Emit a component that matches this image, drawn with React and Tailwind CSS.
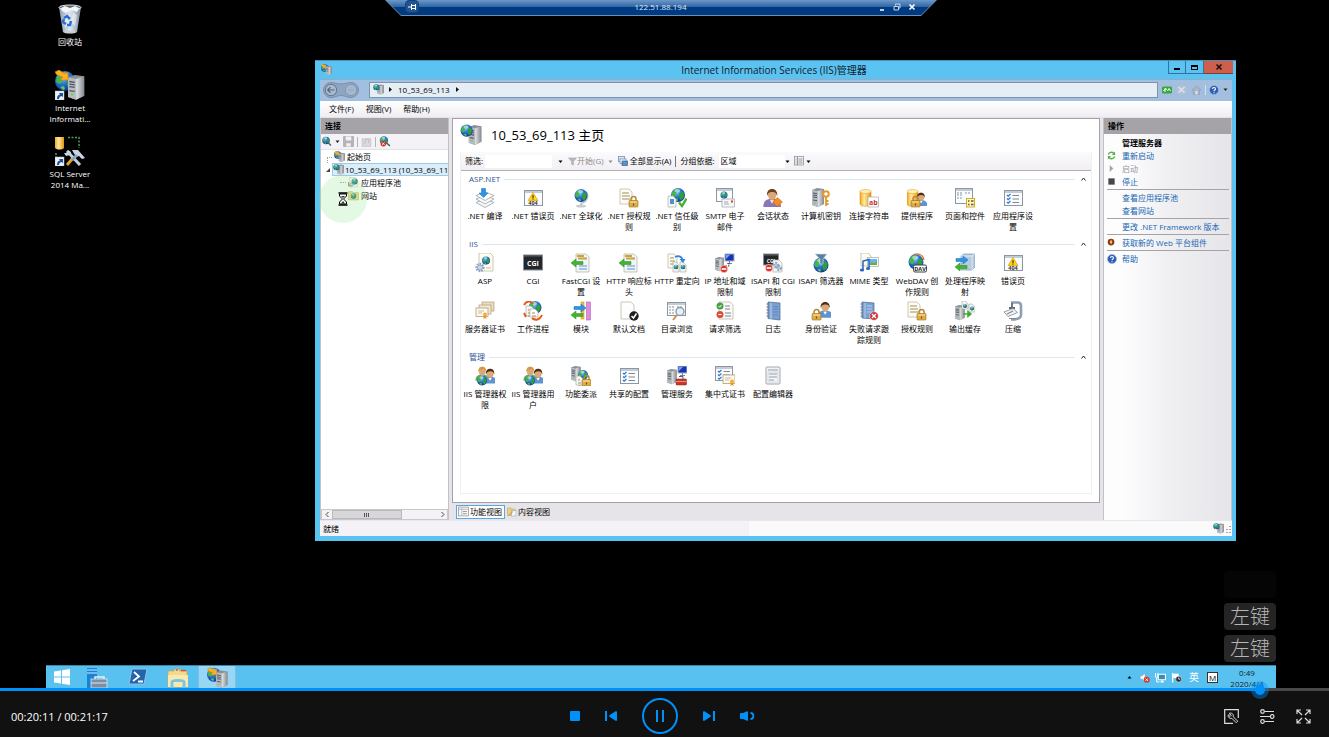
import React, { useState } from "react";

/* ---------- icon parts, all drawn on a 20x20 grid ---------- */

const Svg = ({ size = "w-5 h-5", box = "0 0 20 20", children }) => (
  <svg className={`${size} block shrink-0`} viewBox={box} fill="none" aria-hidden="true">
    {children}
  </svg>
);

const Defs = () => (
  <svg className="absolute w-0 h-0" aria-hidden="true">
    <defs>
      <radialGradient id="sea" cx="0.4" cy="0.3" r="0.75">
        <stop offset="0" stopColor="#8fd0ff" />
        <stop offset="0.45" stopColor="#2b74d8" />
        <stop offset="1" stopColor="#0c2f8c" />
      </radialGradient>
      <linearGradient id="gold" x1="0" y1="0" x2="1" y2="0">
        <stop offset="0" stopColor="#f5a81c" />
        <stop offset="0.4" stopColor="#ffe9a0" />
        <stop offset="1" stopColor="#e8920c" />
      </linearGradient>
      <linearGradient id="steel" x1="0" y1="0" x2="1" y2="0">
        <stop offset="0" stopColor="#e3e5e8" />
        <stop offset="1" stopColor="#85898f" />
      </linearGradient>
      <linearGradient id="bin" x1="0" y1="0" x2="1" y2="0">
        <stop offset="0" stopColor="#8f9dae" />
        <stop offset="0.5" stopColor="#dfe8f1" />
        <stop offset="1" stopColor="#7d8b9b" />
      </linearGradient>
    </defs>
  </svg>
);

const Globe = ({ x = 10, y = 10, r = 7 }) => (
  <g transform={`translate(${x} ${y}) scale(${r / 10})`}>
    <circle r="10" fill="url(#sea)" />
    <path d="M-8-4C-6-8-2-9 1-9L0-5-3-3-2 0-5 3-9 1Z" fill="#43b649" />
    <path d="M2-2 6-5 9-2 8 4 4 8 2 4Z" fill="#2f9f3d" />
    <path d="M-5 6-1 5 0 8-2 9Z" fill="#5cc85a" />
    <ellipse cx="-1" cy="-6" rx="4" ry="2.5" fill="#fff" opacity="0.5" />
  </g>
);

const Server = ({ x = 0, y = 0, s = 1 }) => (
  <g transform={`translate(${x} ${y}) scale(${s})`}>
    <path d="M0 2 5 0 12 1 12 16 6 19 0 17Z" fill="#8b9097" />
    <path d="M0 2 6 3V19L0 17Z" fill="#b7bcc3" />
    <path d="M6 3 12 1V16L6 19Z" fill="url(#steel)" />
    <path d="M1 5 5 5.6M1 7 5 7.6M1 9 5 9.6M1 12 5 12.6" stroke="#51565e" />
    <circle cx="3" cy="15" r="0.8" fill="#58d048" />
  </g>
);

const Doc = ({ x = 0, y = 0, w = 11, h = 14, tint = "#fffdf2", lines = true }) => (
  <g transform={`translate(${x} ${y})`}>
    <path d={`M0 0H${w - 3}L${w} 3V${h}H0Z`} fill={tint} stroke="#b5b09a" strokeWidth="0.7" />
    {lines && <path d={`M2 4H${w - 3}M2 7H${w - 2}M2 10H${w - 2}`} stroke="#9c8f63" />}
  </g>
);

const Win = ({ x = 1, y = 2, w = 18, h = 15, children }) => (
  <g transform={`translate(${x} ${y})`}>
    <rect x="0.5" y="0.5" width={w} height={h} fill="#fbfcfd" stroke="#8e979f" />
    <path d={`M1 2H${w}`} stroke="#c3ccd6" strokeWidth="2" />
    {children}
  </g>
);

const Lock = ({ x = 0, y = 0 }) => (
  <g transform={`translate(${x} ${y})`}>
    <path d="M2 5V3a2.5 2.5 0 0 1 5 0V5" stroke="#b3883a" strokeWidth="1.5" />
    <rect y="4.5" width="9" height="6.5" rx="0.8" fill="#e0ac45" stroke="#9a7020" strokeWidth="0.6" />
    <path d="M1 6H8" stroke="#ffe29a" />
    <path d="M4.5 7.5V9.5" stroke="#6e4b10" strokeWidth="1.2" />
  </g>
);

const Person = ({ x = 0, y = 0, body = "#5d93cf", hair = "#6b4420", s = 1 }) => (
  <g transform={`translate(${x} ${y}) scale(${s})`}>
    <path d="M-0.500 14C-0.500 9.500 2 8 6 8s6.500 1.500 6.500 6Z" fill={body} />
    <path d="M4.500 7H7.500L7 10H5Z" fill="#c78d5e" />
    <ellipse cx="6" cy="4.700" rx="3.300" ry="4" fill="#dba879" />
    <path d="M2.300 6C1 -1 11 -1 9.700 6 9.300 3.500 8 2.800 6 3 4 3.200 3 3.500 2.300 6Z" fill={hair} />
    <path d="M4.500 9 6 11.500 7.500 9Z" fill="#fff" />
  </g>
);

const Db = ({ x = 0, y = 0 }) => (
  <g transform={`translate(${x} ${y})`}>
    <path d="M0 2.500V15C0 18 11 18 11 15V2.500Z" fill="url(#gold)" stroke="#c9860f" strokeWidth="0.5" />
    <ellipse cx="5.500" cy="2.500" rx="5.500" ry="2" fill="#ffeeb5" stroke="#d99a1f" strokeWidth="0.5" />
  </g>
);

const NoEntry = ({ x, y }) => (
  <g transform={`translate(${x} ${y})`}>
    <circle r="3.700" fill="#d6342b" stroke="#fff" strokeWidth="0.5" />
    <path d="M-2.300 0H2.300" stroke="#fff" strokeWidth="1.600" />
  </g>
);

const Checks = ({ x = 0, y = 0 }) => (
  <g transform={`translate(${x} ${y})`}>
    <path d="M0 1 1.200 2.200 3.500 0M0 4.500 1.200 5.700 3.500 3.500M0 8 1.200 9.200 3.500 7" stroke="#2a7bd0" strokeWidth="1.300" />
    <path d="M5.500 1.500H12M5.500 5H12M5.500 8.500H12" stroke="#7d8790" />
  </g>
);

const Cert = ({ x = 0, y = 0 }) => (
  <g transform={`translate(${x} ${y})`}>
    <rect width="12" height="8.500" fill="#fffaf0" stroke="#b39b72" strokeWidth="0.800" />
    <path d="M2 3H8M2 5H6" stroke="#b8aa92" strokeWidth="0.800" />
    <path d="M8 7 7.500 11 9 10 10.500 11 10 7Z" fill="#e88f1c" />
    <circle cx="9" cy="6.500" r="2" fill="#f5ae2d" />
  </g>
);

const Warning = ({ x, y }) => (
  <g transform={`translate(${x} ${y})`}>
    <path d="M5 0 10 8H0Z" fill="#ffd21a" stroke="#d79b08" strokeWidth="0.600" />
    <path d="M5 2.800V5.200M5 6V7" stroke="#2b2412" strokeWidth="1.200" />
  </g>
);

const LeftArrow = ({ x = 0, y = 0, fill = "#41b52f" }) => (
  <path transform={`translate(${x} ${y})`} d="M0 4 5 0V2.500H12V5.500H5V8Z" fill={fill} stroke="#2d8a20" strokeWidth="0.500" />
);

const RightArrow = ({ x = 0, y = 0 }) => (
  <path transform={`translate(${x} ${y})`} d="M12 4 7 0V2.500H0V5.500H7V8Z" fill="#2f93e6" stroke="#1c6cba" strokeWidth="0.500" />
);

const DarkCgi = ({ y = 2, w = 19, h = 15, size = 7 }) => (
  <g>
    <rect x="0.500" y={y} width={w} height={h} fill="#23272b" stroke="#8a9095" />
    <path d={`M1 ${y + 1}H${w}`} stroke="#5a6167" />
    <text x={w / 2 + 0.5} y={y + h / 2 + 3} textAnchor="middle" fontSize={size} fontWeight="700" fill="#fff" fontFamily="Open Sans">CGI</text>
  </g>
);

const Monitor = ({ x = 0, y = 0 }) => (
  <g transform={`translate(${x} ${y})`}>
    <rect width="9" height="7" fill="#1534b8" stroke="#a9b3c2" />
    <path d="M1 1H5L1 5Z" fill="#7f9df0" />
    <path d="M4.500 7V9M2 9.500H7" stroke="#7c8694" />
  </g>
);

const Gear = ({ x, y, r = 3.5 }) => (
  <g transform={`translate(${x} ${y})`}>
    <circle r={r} stroke="#8fa9c4" strokeWidth="2.400" strokeDasharray="1.600 1" />
    <circle r={r - 1} fill="#dce7f2" stroke="#7d9ab8" strokeWidth="0.800" />
    <circle r="1" fill="#fff" stroke="#7d9ab8" strokeWidth="0.500" />
  </g>
);

const icons = {
  compile: (
    <>
      <path d="M1 14.500 10 11 19 14.500 10 19.500Z" fill="#f6f7f8" stroke="#9ba3ab" strokeWidth="0.800" />
      <path d="M1 11 10 7.500 19 11 10 16Z" fill="#fbfbfc" stroke="#9ba3ab" strokeWidth="0.800" />
      <path d="M1 7.500 10 4 19 7.500 10 12.500Z" fill="#fff" stroke="#9ba3ab" strokeWidth="0.800" />
      <path d="M6.500 0.500H10.500V5H13L8.500 9.500 4 5H6.500Z" fill="#2b93e8" stroke="#1a6dbd" strokeWidth="0.500" />
    </>
  ),
  notFound: (
    <>
      <Win />
      <Warning x={5} y={4.5} />
      <text x="10" y="17" textAnchor="middle" fontSize="5.500" fontWeight="700" fill="#333" fontFamily="Open Sans">404</text>
    </>
  ),
  globalize: (
    <>
      <ellipse cx="10" cy="18" rx="5" ry="1.500" fill="#c8ccd1" />
      <path d="M15.500 3.500C18.500 8 16 15 10 15V17.500" stroke="#b2b8bf" strokeWidth="1.200" />
      <Globe x={10} y={7.5} r={6.5} />
    </>
  ),
  authRules: (
    <>
      <Doc x={1} y={1} w={12} h={15} />
      <Lock x={10} y={8} />
    </>
  ),
  trust: (
    <>
      <Globe x={11} y={7} r={7} />
      <Doc x={1} y={8} w={8} h={11} tint="#f2f6fa" lines={false} />
      <rect x="3" y="11" width="4" height="5" fill="#4c90cf" />
      <path d="M12 14.500 15 18 19.500 10.500" stroke="#3fb02f" strokeWidth="2.400" />
    </>
  ),
  smtp: (
    <>
      <Win x={1} y={0} w={16} h={13} />
      <Globe x={9} y={7} r={3.5} />
      <rect x="7" y="11" width="12.500" height="8" fill="#f7f7f8" stroke="#9aa1a9" strokeWidth="0.700" />
      <path d="M9 14H13M9 16H14" stroke="#8f97a0" strokeWidth="0.800" />
      <rect x="16" y="12.500" width="2" height="2" fill="#e0383a" />
    </>
  ),
  session: (
    <>
      <Person x={1} y={0} s={1.35} body="#8a75b8" hair="#6f421d" />
      <path d="M14.500 9.500 19.500 14 14.500 18.500 9.500 14Z" fill="#f28b24" stroke="#c96812" strokeWidth="0.500" />
    </>
  ),
  machineKey: (
    <>
      <Server x={1} y={0} />
      <circle cx="15" cy="6" r="2.800" stroke="#e39a26" strokeWidth="2" />
      <path d="M15 9V18M15 13H17.500M15 16H17.500" stroke="#e39a26" strokeWidth="1.800" />
    </>
  ),
  connStr: (
    <>
      <Db x={1} y={1} />
      <rect x="9" y="9" width="10.500" height="10" fill="#fff" stroke="#a9a9a9" strokeWidth="0.700" />
      <text x="14.300" y="17" textAnchor="middle" fontSize="7" fontWeight="700" fill="#d0302b" fontFamily="Open Sans">ab</text>
    </>
  ),
  providers: (
    <>
      <Db x={0} y={1} />
      <Person x={8} y={4} s={1} hair="#4d3016" />
      <Lock x={4} y={8} />
    </>
  ),
  pages: (
    <>
      <Win x={0} y={0} w={17} h={15}>
        <path d="M2 5H8M2 7H8M10 5H15M2 10H7" stroke="#8095ad" strokeDasharray="2 1" />
      </Win>
      <rect x="11.500" y="10.500" width="8" height="8.500" fill="#fff6bd" stroke="#d1ad2a" />
      <path d="M13 13H14.500M16 13H18.500M13 16.500H14.500M16 16.500H18.500" stroke="#645a2b" strokeWidth="1.400" />
    </>
  ),
  settings: (
    <>
      <Win />
      <Checks x={4} y={6} />
    </>
  ),
  asp: (
    <>
      <Doc x={4} y={0} w={14} h={18} lines={false} />
      <Globe x={11} y={7.5} r={4} />
      <path d="M11 15H16" stroke="#c9bd94" />
      <Gear x={5} y={14.5} />
    </>
  ),
  cgi: <DarkCgi />,
  headers: (
    <>
      <Doc x={5} y={1} w={13} h={18} tint="#eff5fa" lines={false} />
      <path d="M6 3H13M7 5.500H16" stroke="#c4a63a" strokeWidth="1.800" />
      <path d="M8 13H16M8 16H16" stroke="#8fb4d8" strokeWidth="1.500" />
      <LeftArrow x={0} y={6} />
    </>
  ),
  redirect: (
    <>
      <Doc x={1} y={1} w={9} h={14} />
      <Doc x={6} y={9} w={6} h={10} tint="#eef5fb" lines={false} />
      <Doc x={13} y={9} w={6} h={10} tint="#eef5fb" lines={false} />
      <Globe x={9} y={14} r={2.3} />
      <Globe x={16} y={14} r={2.3} />
      <path d="M8 4C12 2 15 4 15.500 7" stroke="#2b86d9" strokeWidth="1.800" />
      <path d="M12.500 6H18.500L16 10Z" fill="#2b86d9" />
    </>
  ),
  ip: (
    <>
      <Server x={0} y={4} s={0.75} />
      <Monitor x={10} y={1} />
      <path d="M14 10V13H9" stroke="#303640" strokeDasharray="1.500 1" />
      <NoEntry x={9} y={16} />
    </>
  ),
  isapiCgi: (
    <>
      <DarkCgi y={1} w={15} h={11} size={5} />
      <Doc x={10} y={7} w={9} h={12} tint="#f5f7fa" lines={false} />
      <Gear x={13} y={12} r={2} />
      <Gear x={16} y={15} r={2} />
      <NoEntry x={6} y={15} />
    </>
  ),
  isapiFilter: (
    <>
      <Globe x={10} y={12} r={7.5} />
      <path d="M4 1H16L12 6V11H9V6Z" fill="#5e7f9c" stroke="#d5e2ec" strokeWidth="0.600" />
    </>
  ),
  mime: (
    <>
      <Doc x={2} y={0} w={10} h={13} lines={false} />
      <rect x="8.500" y="4.500" width="11" height="9" fill="#f8fbff" stroke="#a4acb3" strokeWidth="0.700" />
      <path d="M10 6H18V12H10Z" fill="#6cb3eb" />
      <path d="M10 12 13 9 15 10.500 18 8V12Z" fill="#62b23d" />
      <path d="M4 16V8L10 6.500V15" stroke="#2464bd" strokeWidth="1.500" />
      <ellipse cx="3" cy="17" rx="2.200" ry="1.600" fill="#2464bd" />
      <ellipse cx="9" cy="15.500" rx="2" ry="1.500" fill="#2464bd" />
    </>
  ),
  webdav: (
    <>
      <path d="M3 7C4-1 16-1 17 7" stroke="#e07a34" strokeWidth="1.500" />
      <Globe x={9} y={9} r={7.5} />
      <rect x="6.500" y="12" width="13" height="7" rx="1.500" fill="#fff" stroke="#3b424a" />
      <text x="13" y="17.600" textAnchor="middle" fontSize="5.500" fontWeight="700" fill="#222" fontFamily="Open Sans">DAV</text>
    </>
  ),
  handlers: (
    <>
      <path d="M6 3 9 1H20V14L17 17H6Z" fill="#b4cbe0" stroke="#7f99b3" strokeWidth="0.700" />
      <path d="M6 3H17V17M17 3 20 1" stroke="#e9f2fa" strokeWidth="0.800" />
      <RightArrow x={1} y={3} />
      <LeftArrow x={0} y={10} />
    </>
  ),
  certs: (
    <>
      <rect x="7" y="1" width="12" height="9" fill="#e9dcc4" stroke="#b39b72" strokeWidth="0.700" />
      <rect x="4" y="4" width="12" height="9" fill="#f3e8d4" stroke="#b39b72" strokeWidth="0.700" />
      <Cert x={1} y={7} />
    </>
  ),
  worker: (
    <>
      <Globe x={12} y={6.5} r={6.5} />
      <Doc x={3} y={5} w={8} h={10} tint="#f4f4f4" />
      <Doc x={7} y={8} w={8} h={8} tint="#fff" />
      <path d="M1 4C4-1 8 0 10 3M19 14C17 19 12 20 9 17M3 16 1 12" stroke="#e65a1e" strokeWidth="2" />
    </>
  ),
  modules: (
    <>
      <rect x="10" y="1" width="3" height="17" fill="#f3c33a" stroke="#bd8c12" strokeWidth="0.500" />
      <rect x="15.500" y="1" width="4" height="18" fill="#e08be0" stroke="#a050a5" strokeWidth="0.500" />
      <RightArrow x={3} y={3} />
      <LeftArrow x={0} y={10} />
    </>
  ),
  defaultDoc: (
    <>
      <Doc x={2} y={1} w={13} h={17} tint="#fdfdfd" lines={false} />
      <circle cx="15" cy="15" r="4.700" fill="#1c1e20" />
      <path d="M12.500 15 14.500 17 17.500 12.500" stroke="#fff" strokeWidth="1.500" />
    </>
  ),
  browse: (
    <>
      <Win x={0} y={1} w={18} h={13}>
        <path d="M2 5H8M2 8H7M2 11H8M10 5H16" stroke="#8a9096" strokeDasharray="2 1" />
      </Win>
      <circle cx="13" cy="10.500" r="4" fill="#e3f1fc" stroke="#8c979f" strokeWidth="1.300" />
      <path d="M10 14 6 19" stroke="#c98e4d" strokeWidth="2" />
    </>
  ),
  reqFilter: (
    <>
      <Doc x={4} y={1} w={14} h={17} tint="#fbfbfb" lines={false} />
      <path d="M10 5H15M10 8H15M10 12H16M10 15H16" stroke="#7b858e" />
      <circle cx="5" cy="5" r="3.500" fill="#42a447" />
      <circle cx="5" cy="13.500" r="3.500" fill="#e04a35" />
      <path d="M3.500 5 4.700 6.200 6.500 4M3.300 13.500H6.700" stroke="#fff" />
    </>
  ),
  log: (
    <>
      <path d="M5 1 17 2V19L5 17.500Z" fill="#7ba0d4" stroke="#45648f" strokeWidth="0.700" />
      <path d="M8 2V18" stroke="#b9d1ee" />
      <path d="M10 5.500H15M10 8H15M10 11H15M10 14H15" stroke="#5a80b8" strokeWidth="0.800" />
      <path d="M3.500 3H6M3.500 6H6M3.500 9H6M3.500 12H6M3.500 15H6" stroke="#6f7880" />
    </>
  ),
  auth: (
    <>
      <Person x={7} y={0} s={1.2} hair="#4d3016" />
      <Lock x={1} y={8} />
    </>
  ),
  failed: (
    <>
      <path d="M3 1 15 2V18L3 17Z" fill="#7ba0d4" stroke="#45648f" strokeWidth="0.700" />
      <path d="M6 2V17M8 5H13M8 8H13M8 11H13" stroke="#b9d1ee" />
      <path d="M1.500 3H4M1.500 6H4M1.500 9H4M1.500 12H4M1.500 15H4" stroke="#6f7880" />
      <circle cx="15" cy="15" r="4.300" fill="#cc2d2b" stroke="#e9e9e9" strokeWidth="0.600" />
      <path d="M13 13 17 17M17 13 13 17" stroke="#fff" strokeWidth="1.400" />
    </>
  ),
  outputCache: (
    <>
      <Server x={0} y={4} s={0.8} />
      <Doc x={7} y={0} w={6} h={8} tint="#f0f6fb" lines={false} />
      <Doc x={14} y={3} w={6} h={8} tint="#f0f6fb" lines={false} />
      <Globe x={10} y={5} r={2} />
      <Globe x={17} y={7.5} r={2} />
      <path d="M8 13H13M13 10.500 16 13 13 15.500Z" stroke="#3fae33" fill="#3fae33" strokeWidth="1.500" />
    </>
  ),
  compress: (
    <>
      <path d="M8 1.500H15C17 1.500 18 3 18 5V14C18 17 15 18.500 8 18.500" stroke="#8f9fb3" strokeWidth="2.600" />
      <path d="M9 2V7M6 7H12" stroke="#5d6b7c" strokeWidth="1.800" />
      <path d="M1 11 10 7.500 14.500 11.500 5 15.500Z" fill="#f4f4f5" stroke="#7f8890" strokeWidth="0.800" />
      <path d="M4 13 10 10M6 17.500H13" stroke="#7c8998" strokeWidth="1.200" />
    </>
  ),
  users: (
    <>
      <Person x={1} y={0} s={1.05} body="#6aa84f" hair="#d29b3a" />
      <Person x={8.5} y={2} s={1.1} hair="#4a2e17" />
      <Globe x={7} y={14.5} r={5} />
    </>
  ),
  delegation: (
    <>
      <Server x={0} y={0} s={0.8} />
      <Globe x={12} y={9} r={5} />
      <Doc x={5} y={10} w={7} h={9} tint="#f4f8fb" />
      <Lock x={11} y={9} />
    </>
  ),
  service: (
    <>
      <Server x={0} y={3} s={0.8} />
      <Monitor x={11} y={0} />
      <path d="M12 10.500H16V13" stroke="#555c66" />
      <rect x="9" y="13" width="10.500" height="6" rx="0.800" fill="#c9372c" stroke="#83201a" strokeWidth="0.500" />
      <path d="M9 15.500H19.500" stroke="#f0a59b" strokeWidth="0.800" />
    </>
  ),
  centralCert: (
    <>
      <Win x={0} y={0} w={17} h={14}>
        <Checks x={3} y={4} />
      </Win>
      <Cert x={8} y={9} />
    </>
  ),
  editor: (
    <>
      <rect x="3" y="1" width="14" height="17" rx="1" fill="#f2f3f5" stroke="#a2a8ae" />
      <path d="M5 4H15M6 8H14M6 11H14M6 14H11" stroke="#8fa0b1" />
      <rect x="5" y="6" width="10" height="10" stroke="#c9ced4" strokeWidth="0.600" />
    </>
  ),
};

const ServerGlobe = ({ size = "w-3 h-3" }) => (
  <Svg size={size}>
    <Server x={8} y={1} s={0.95} />
    <Globe x={6} y={6} r={5.5} />
  </Svg>
);

const IisLogo = ({ size }) => (
  <Svg size={size} box="0 0 30 30">
    <Globe x={10} y={11} r={10} />
    <g transform="translate(13 5) scale(1.35 1.3)">
      <Server />
    </g>
    <path d="M1 3 5 1 11 5 14 2V11H5L8 8 2 6Z" fill="#ffb020" stroke="#d87f06" strokeWidth="0.700" />
  </Svg>
);

const ShortcutMark = () => (
  <g transform="translate(0 21)">
    <rect width="9" height="9" fill="#eef2f6" stroke="#b8c0c8" strokeWidth="0.500" />
    <path d="M2 8C2 5 3 4 5 3.500L4 2H8V6L6.500 5C4.500 5.500 4 6.500 4 8Z" fill="#1d4f9c" />
  </g>
);

const Caret = ({ color = "text-black", up = false }) => (
  <svg className={`w-[5px] h-[3px] shrink-0 ${color}`} viewBox="0 0 5 3" aria-hidden="true">
    <path d={up ? "M0.500 2.500H4.500L2.500 0Z" : "M0.500 0.500H4.500L2.500 3Z"} fill="currentColor" />
  </svg>
);

const CaretRight = () => (
  <svg className="w-[3px] h-[5px] shrink-0" viewBox="0 0 3 5" aria-hidden="true">
    <path d="M0 0V5L3 2.500Z" fill="#111" />
  </svg>
);

const Help = () => (
  <Svg size="w-[10px] h-[10px]">
    <circle cx="10" cy="10" r="9" fill="#2c5cb8" stroke="#9fb3d6" strokeWidth="1.500" />
    <path d="M7 8C7 4 13 4 13 8 13 10 10 10 10 12.500M10 14.500V16.500" stroke="#fff" strokeWidth="2.200" />
  </Svg>
);

/* ---------- data ---------- */

const sections = [
  {
    title: "ASP.NET",
    items: [
      ["compile", [".NET 编译"]],
      ["notFound", [".NET 错误页"]],
      ["globalize", [".NET 全球化"]],
      ["authRules", [".NET 授权规", "则"]],
      ["trust", [".NET 信任级", "别"]],
      ["smtp", ["SMTP 电子", "邮件"]],
      ["session", ["会话状态"]],
      ["machineKey", ["计算机密钥"]],
      ["connStr", ["连接字符串"]],
      ["providers", ["提供程序"]],
      ["pages", ["页面和控件"]],
      ["settings", ["应用程序设", "置"]],
    ],
  },
  {
    title: "IIS",
    items: [
      ["asp", ["ASP"]],
      ["cgi", ["CGI"]],
      ["headers", ["FastCGI 设", "置"]],
      ["headers", ["HTTP 响应标", "头"]],
      ["redirect", ["HTTP 重定向"]],
      ["ip", ["IP 地址和域", "限制"]],
      ["isapiCgi", ["ISAPI 和 CGI", "限制"]],
      ["isapiFilter", ["ISAPI 筛选器"]],
      ["mime", ["MIME 类型"]],
      ["webdav", ["WebDAV 创", "作规则"]],
      ["handlers", ["处理程序映", "射"]],
      ["notFound", ["错误页"]],
      ["certs", ["服务器证书"]],
      ["worker", ["工作进程"]],
      ["modules", ["模块"]],
      ["defaultDoc", ["默认文档"]],
      ["browse", ["目录浏览"]],
      ["reqFilter", ["请求筛选"]],
      ["log", ["日志"]],
      ["auth", ["身份验证"]],
      ["failed", ["失败请求跟", "踪规则"]],
      ["authRules", ["授权规则"]],
      ["outputCache", ["输出缓存"]],
      ["compress", ["压缩"]],
    ],
  },
  {
    title: "管理",
    items: [
      ["users", ["IIS 管理器权", "限"]],
      ["users", ["IIS 管理器用", "户"]],
      ["delegation", ["功能委派"]],
      ["settings", ["共享的配置"]],
      ["service", ["管理服务"]],
      ["centralCert", ["集中式证书"]],
      ["editor", ["配置编辑器"]],
    ],
  },
];

/* ---------- desktop ---------- */

const DesktopIcon = ({ lines, children }) => (
  <button type="button" className="w-12 h-[66px] flex flex-col items-center text-[8px] leading-[11px] text-white">
    {children}
    <span className="mt-[2px] whitespace-nowrap">
      {lines.map((line) => (
        <span key={line} className="block">{line}</span>
      ))}
    </span>
  </button>
);

const DesktopIcons = () => (
  <div className="absolute left-0 top-1 flex flex-col">
    <DesktopIcon lines={["回收站"]}>
      <Svg size="w-[30px] h-[30px]" box="0 0 30 30">
        <path d="M4 3 8 28C10 30 20 30 22 28L26 3Z" fill="url(#bin)" />
        <ellipse cx="15" cy="3.500" rx="11" ry="2.500" fill="#59636f" stroke="#e8edf2" />
        <path d="M6 4 10 2 15 4 20 2 24 4 22 8 16 6 11 9 7 7Z" fill="#f4f7fa" />
        <path d="M9 12 12 10 14 20 10 24ZM18 8 22 11 20 22 16 18Z" fill="#fff" opacity="0.500" />
        <path d="M9 14 12 12 15 15M16 17 15 21H12M11 20 8 18 9 15" stroke="#2b6fd2" strokeWidth="2.500" />
        <path d="M10 28H20" stroke="#c9cfd6" strokeWidth="2" />
      </Svg>
    </DesktopIcon>
    <DesktopIcon lines={["Internet", "Informati..."]}>
      <Svg size="w-[30px] h-[30px]" box="0 0 30 30">
        <Globe x={10} y={11} r={10} />
        <g transform="translate(13 5) scale(1.35 1.3)">
          <Server />
        </g>
        <path d="M0 2 4 0 10 4 13 2V10H5L8 7 2 5Z" fill="#ffb020" stroke="#d87f06" strokeWidth="0.700" />
        <ShortcutMark />
      </Svg>
    </DesktopIcon>
    <DesktopIcon lines={["SQL Server", "2014 Ma..."]}>
      <Svg size="w-[30px] h-[30px]" box="0 0 30 30">
        <path d="M0 1H9V12C7 14 2 14 0 12Z" fill="url(#gold)" />
        <path d="M13 1.500H24V12M1 17V21" stroke="#4f9a58" strokeWidth="1.500" strokeDasharray="2 1.500" />
        <path d="M18 22 12 29" stroke="#e2a32d" strokeWidth="3" />
        <path d="M12 15 25 29" stroke="#c3cfdf" strokeWidth="3" />
        <path d="M9 17 12 17 13 14 16 16 15 19 11 20ZM17 14 23 14 30 22 27 23 24 20 21 21Z" fill="#c9d5e4" />
        <path d="M22 19 17 24" stroke="#8fa3bf" strokeWidth="3" />
        <ShortcutMark />
      </Svg>
    </DesktopIcon>
  </div>
);

const RemoteBar = () => (
  <div className="absolute top-0 left-1/2 -translate-x-1/2 w-[552px] h-4 bg-[#6f8fb4] px-px pb-px [clip-path:polygon(0_0,100%_0,calc(100%-16px)_100%,16px_100%)]">
    <div className="h-full flex items-center pl-[19px] pr-4 pb-[2px] text-white bg-linear-to-b from-[#6c98c8] via-[#2f66a5] via-45% to-[#003a80] to-50% [clip-path:polygon(0_0,100%_0,calc(100%-15px)_100%,15px_100%)]">
      <button type="button" aria-label="固定" className="w-[14px] h-[13px] rounded-sm border border-[#1c3f70] bg-[#1f5596] flex items-center justify-center">
        <Svg size="w-2 h-2" box="0 0 8 8">
          <path d="M0 4H3M3.500 1V7M4 2.500H7M4 5.500H7M7.500 1V7" stroke="#fff" />
        </Svg>
      </button>
      <span className="flex-1 text-center text-[8px] leading-3 text-[#dfe9f5] pl-7">122.51.88.194</span>
      <button type="button" aria-label="最小化" className="w-4 flex justify-center">
        <Svg size="w-2 h-2" box="0 0 8 8"><path d="M2 7H6" stroke="#fff" strokeWidth="1.500" /></Svg>
      </button>
      <button type="button" aria-label="还原" className="w-[14px] flex justify-center">
        <Svg size="w-2 h-2" box="0 0 8 8"><path d="M2.500 2.500V1H7V5H5.500M1 3.500H5.500V7H1Z" stroke="#c6d6ea" /></Svg>
      </button>
      <button type="button" aria-label="关闭" className="w-4 flex justify-center">
        <Svg size="w-2 h-2" box="0 0 8 8"><path d="M1.500 1.500 6.500 6.500M6.500 1.500 1.500 6.500" stroke="#fff" strokeWidth="1.600" /></Svg>
      </button>
    </div>
  </div>
);

/* ---------- IIS manager ---------- */

const TitleBar = () => (
  <div className="h-[18px] shrink-0 flex items-start">
    <div className="w-[60px] pt-[3px] pl-px">
      <IisLogo size="w-[11px] h-[11px]" />
    </div>
    <h1 className="flex-1 text-center text-[10px] leading-[18px] text-[#10202c]">Internet Information Services (IIS)管理器</h1>
    <div className="flex h-[13px]">
      <button type="button" aria-label="最小化" className="w-[18px] border border-t-0 border-[#35719a] flex items-center justify-center">
        <span className="w-1.5 h-0.5 mt-1 bg-black" />
      </button>
      <button type="button" aria-label="最大化" className="w-[18px] border border-t-0 border-l-0 border-[#35719a] flex items-center justify-center">
        <span className="w-[7px] h-[5px] border border-t-2 border-black" />
      </button>
      <button type="button" aria-label="关闭" className="w-[29px] bg-[#cf5f4c] border-b border-[#803d35] flex items-center justify-center">
        <Svg size="w-[6px] h-[6px]" box="0 0 6 6"><path d="M0.500 0.500 5.500 5.500M5.500 0.500 0.500 5.500" stroke="#111" strokeWidth="1.500" /></Svg>
      </button>
    </div>
  </div>
);

const AddressBar = () => (
  <div className="h-[22px] shrink-0 flex items-center bg-[#a3bfdf] border-t border-[#93abc6] pl-[3px] pr-1 pb-[2px]">
    <Svg size="w-[36px] h-[16px]" box="0 0 36 16">
      <path d="M8 0.500C12 0.500 14 2 18 2S24 0.500 28 0.500A7.500 7.500 0 0 1 28 15.500C24 15.500 22 13.500 18 13.500S12 15.500 8 15.500A7.500 7.500 0 0 1 8 0.500Z" fill="#8fa6c2" stroke="#7b90ab" />
      <circle cx="8" cy="8" r="5.700" fill="#a9bbd0" stroke="#63758c" />
      <path d="M11.500 8H5M7.500 5.200 4.700 8 7.500 10.800" stroke="#52647a" strokeWidth="1.200" />
      <circle cx="28" cy="8" r="5.700" fill="#a3b7cf" stroke="#8497af" />
      <path d="M25 8H31" stroke="#95a9c2" />
    </Svg>
    <div className="ml-[10px] flex-1 h-4 bg-[#e5edf5] border border-[#7f93ad] flex items-center pl-[3px] text-[8px]">
      <ServerGlobe size="w-[11px] h-[11px]" />
      <span className="w-3 flex justify-center"><CaretRight /></span>
      <a href="#server" className="px-[2px]">10_53_69_113</a>
      <span className="w-3 flex justify-center"><CaretRight /></span>
    </div>
    <div className="flex items-center gap-1 pl-1">
      <Svg size="w-[10px] h-[10px]">
        <rect x="0" y="3" width="20" height="14" rx="3" fill="#35a83a" />
        <path d="M3 12 7 6 9 10M11 12 14 7 17 12M6 14V8" stroke="#fff" strokeWidth="2" />
      </Svg>
      <Svg size="w-[11px] h-[10px]">
        <rect x="0" y="1" width="20" height="17" fill="#b3c1d1" />
        <path d="M4 4 16 15M16 4 4 15" stroke="#dfe6ee" strokeWidth="2.500" />
      </Svg>
      <Svg size="w-[11px] h-[10px]">
        <path d="M1 10 10 2 19 10H16V19H4V10Z" fill="#aab5c3" stroke="#8594a7" />
        <path d="M8 12H12V19H8Z" fill="#dfe5ec" />
      </Svg>
      <span className="w-px h-[10px] -mx-px bg-[#d6e2f0]" />
      <Help />
      <Caret color="text-[#222]" />
    </div>
  </div>
);

const MenuBar = () => (
  <nav className="h-[17px] shrink-0 flex items-center gap-3 pl-[9px] pb-px text-[8px] bg-linear-to-b from-white to-[#efedf2] border-b border-[#e4e2e7]">
    {["文件(F)", "视图(V)", "帮助(H)"].map((label) => (
      <button key={label} type="button">{label}</button>
    ))}
  </nav>
);

const PanelHeader = ({ children }) => (
  <h2 className="h-4 shrink-0 bg-[#a5a2a8] pl-[4px] text-[8px] leading-4 font-bold">{children}</h2>
);

const Connections = () => (
  <aside className="w-[129px] shrink-0 flex flex-col bg-white border border-[#c4c2c8] border-y-0">
    <PanelHeader>连接</PanelHeader>
    <div className="h-4 shrink-0 flex items-center bg-[#f4f2f6] border-b border-[#e3e1e6] pl-px gap-[3px]">
      <Svg size="w-[10px] h-[11px]">
        <Globe x={8} y={8} r={7.5} />
        <path d="M11 11 18 18" stroke="#48626f" strokeWidth="3" />
      </Svg>
      <Caret color="text-[#222]" />
      <Svg size="w-[11px] h-[11px]">
        <path d="M1 1H19V19H1Z" fill="#b5b5b9" stroke="#96969b" />
        <path d="M5 1H15V8H5ZM6 13H14V19H6Z" fill="#f1f1f3" />
      </Svg>
      <span className="w-px h-[10px] bg-[#b5b3b8]" />
      <Svg size="w-[11px] h-[11px]">
        <path d="M2 5H18V19H2Z" fill="#dadade" stroke="#b8b8bc" />
        <path d="M6 15 9 6H14V13" stroke="#c2c2c7" strokeWidth="2" />
      </Svg>
      <span className="w-px h-[10px] bg-[#b5b3b8]" />
      <Svg size="w-[12px] h-[11px]">
        <Globe x={8} y={8} r={7.5} />
        <path d="M13 13 19 18" stroke="#48626f" strokeWidth="2.500" />
        <circle cx="7" cy="14" r="5" fill="#d0342c" />
        <path d="M5 12 9 16M9 12 5 16" stroke="#fff" strokeWidth="1.800" />
      </Svg>
    </div>
    <ul className="flex-1 min-h-0 text-[8px] leading-[13px] whitespace-nowrap">
      <li className="h-[13px] flex items-center gap-[2px] pl-[6px]">
        <span className="w-[5px] h-1.5 mt-1.5 border-t border-l border-dotted border-[#a0a0a0]" />
        <IisLogo size="w-[11px] h-[11px]" />
        起始页
      </li>
      <li>
        <div className="h-[13px] flex items-center pl-[5px]">
          <svg className="w-1 h-1 mr-[2px] shrink-0" viewBox="0 0 4 4" aria-hidden="true"><path d="M4 0V4H0Z" fill="#444" /></svg>
          <span className="h-full min-w-0 flex items-center gap-px flex-1 bg-[#dcedfa] border border-r-0 border-[#9acbee]">
            <ServerGlobe size="w-[11px] h-[11px]" />
            10_53_69_113 (10_53_69_11
          </span>
        </div>
        <ul className="pl-[19px]">
          <li className="h-[13px] flex items-center gap-[2px]">
            <span className="w-[6px] border-t border-dotted border-[#a0a0a0]" />
            <Svg size="w-[11px] h-[11px]">
              <Doc x={3} y={1} w={14} h={17} tint="#fff" lines={false} />
              <Globe x={12} y={8} r={5.5} />
              <path d="M1 9V16H8" stroke="#e07a34" strokeWidth="2" />
              <Gear x={6} y={14} r={3} />
            </Svg>
            应用程序池
          </li>
          <li className="h-[13px] flex items-center gap-[2px]">
            <span className="w-[6px] border-t border-dotted border-[#a0a0a0]" />
            <Svg size="w-[11px] h-[11px]">
              <path d="M1 3H8L10 5H19V18H1Z" fill="#f2d98b" stroke="#c1a045" />
              <Globe x={10} y={11} r={5} />
            </Svg>
            网站
          </li>
        </ul>
      </li>
    </ul>
    <div className="h-[11px] shrink-0 flex items-stretch bg-[#f3f2f4] border border-[#c9c7cc]">
      <button type="button" aria-label="向左滚动" className="w-[10px] flex items-center justify-center">
        <Svg size="w-[5px] h-[5px]" box="0 0 5 5"><path d="M3.500 0 1 2.500 3.500 5" stroke="#444" /></Svg>
      </button>
      <div className="flex-1 flex">
        <div className="w-2/3 bg-[#d7d6d9] border border-[#b9b8bc] flex items-center justify-center gap-px">
          <span className="w-px h-1 bg-[#55545a]" />
          <span className="w-px h-1 bg-[#55545a]" />
          <span className="w-px h-1 bg-[#55545a]" />
        </div>
      </div>
      <button type="button" aria-label="向右滚动" className="w-[10px] flex items-center justify-center">
        <Svg size="w-[5px] h-[5px]" box="0 0 5 5"><path d="M1.500 0 4 2.500 1.500 5" stroke="#444" /></Svg>
      </button>
    </div>
  </aside>
);

const FilterBar = () => (
  <div className="h-[19px] flex items-center pl-[4px] text-[8px] bg-linear-to-b from-[#fbfafc] to-[#f1eff3] border-b border-[#b3b0b6] whitespace-nowrap">
    <label htmlFor="filter">筛选:</label>
    <input id="filter" type="text" className="ml-[2px] w-[67px] h-[13px] bg-white outline-none" />
    <button type="button" aria-label="筛选历史" className="w-4 flex justify-center"><Caret /></button>
    <button type="button" className="flex items-center text-[#8b8b8b]">
      <Svg size="w-[9px] h-[9px]"><path d="M1 2H19L12 10V18L8 16V10Z" fill="#b9b9bd" stroke="#96969b" /></Svg>
      开始(G)
    </button>
    <button type="button" aria-label="开始选项" className="w-[14px] flex justify-center"><Caret color="text-[#8b8b8b]" /></button>
    <button type="button" className="flex items-center gap-[2px]">
      <Svg size="w-[10px] h-[10px]">
        <rect x="1" y="1" width="12" height="10" fill="#d7e8f7" stroke="#6f8bab" strokeWidth="1.500" />
        <rect x="4" y="6" width="12" height="9" fill="#fff" stroke="#6f8bab" strokeWidth="1.500" />
        <rect x="8" y="10" width="11" height="9" fill="#5793cf" stroke="#41678f" strokeWidth="1.500" />
      </Svg>
      全部显示(A)
    </button>
    <span className="w-px h-[11px] bg-[#77747b] mx-[4px]" />
    <label htmlFor="group">分组依据:</label>
    <span className="ml-1 w-[71px] flex items-center">
      <select id="group" className="flex-1 h-[13px] appearance-none outline-none bg-white pl-[2px]">
        <option>区域</option>
      </select>
      <Caret />
    </span>
    <button type="button" aria-label="视图" className="ml-[4px] flex items-center gap-[2px]">
      <Svg size="w-[10px] h-[10px]">
        <rect x="1" y="1" width="18" height="17" fill="#f5f5f7" stroke="#8d8d93" strokeWidth="1.500" />
        <path d="M7 2V18M3 6H5M3 10H5M3 14H5M9 6H17M9 10H17M9 14H17" stroke="#6f7784" strokeWidth="1.500" />
      </Svg>
      <Caret />
    </button>
  </div>
);

const FeatureSection = ({ title, items }) => (
  <section>
    <div className="h-[17px] flex items-center gap-[4px] pl-2 pr-[5px] pb-px">
      <h3 className="text-[8px] text-[#2f5496]">{title}</h3>
      <span className="flex-1 h-px bg-[#dbe7f1]" />
      <button type="button" aria-label={`折叠 ${title}`} className="ml-[2px]">
        <Svg size="w-[5px] h-[4px]" box="0 0 5 4"><path d="M0.500 3.500 2.500 1 4.500 3.500" stroke="#222" /></Svg>
      </button>
    </div>
    <ul className="flex flex-wrap w-[580px] pr-1">
      {items.map(([icon, lines]) => (
        <li key={lines.join("")} className="w-12 h-12">
          <button type="button" className="w-full flex flex-col items-center text-[8px] leading-[11px] whitespace-nowrap">
            <Svg>{icons[icon]}</Svg>
            <span className="mt-[2px]">
              {lines.map((line) => (
                <span key={line} className="block">{line}</span>
              ))}
            </span>
          </button>
        </li>
      ))}
    </ul>
  </section>
);

const HomePage = () => (
  <main className="flex-1 min-w-0 flex flex-col">
    <div className="flex-1 min-h-0 bg-white border border-[#a3a1a7] flex flex-col pl-[7px] pr-[7px] pb-2">
      <div className="h-[33px] shrink-0 flex items-center gap-[9px] pb-[2px]">
        <ServerGlobe size="w-[22px] h-[22px]" />
        <h2 className="text-[13px] leading-4">10_53_69_113 主页</h2>
      </div>
      <div className="flex-1 min-h-0 overflow-hidden border-x border-b border-[#eef0f4]">
        <FilterBar />
        {sections.map((section) => (
          <FeatureSection key={section.title} {...section} />
        ))}
      </div>
    </div>
    <div className="h-[17px] shrink-0 flex items-center pl-[4px] text-[8px]">
      <button type="button" className="h-[14px] w-[49px] flex items-center gap-px px-px bg-white border border-[#5aa7e0]">
        <Svg size="w-[11px] h-[11px]">
          <rect x="1" y="2" width="18" height="16" fill="#f6f6f8" stroke="#9a9aa0" strokeWidth="1.500" />
          <path d="M7 3V18M2 6H18" stroke="#b0b0b6" strokeWidth="1.500" />
          <path d="M9 10H16M9 14H16" stroke="#7d8895" strokeWidth="1.500" />
        </Svg>
        功能视图
      </button>
      <button type="button" className="h-[14px] flex items-center gap-px px-[2px]">
        <Svg size="w-[10px] h-[10px]">
          <path d="M1 2H8L10 4H16V17H1Z" fill="#f0cf7c" stroke="#c39d3e" />
          <rect x="9" y="7" width="9" height="11" fill="#f4f8fc" stroke="#8aa0b8" />
          <path d="M3 17 12 9" stroke="#c98e4d" strokeWidth="2" />
        </Svg>
        内容视图
      </button>
    </div>
  </main>
);

const ActionRow = ({ icon, disabled = false, children }) => (
  <li className="h-[13px] flex items-center">
    <span className="w-[15px] shrink-0 flex justify-start">{icon}</span>
    <a href="#action" aria-disabled={disabled} className={disabled ? "text-[#98969c]" : "text-[#1766b0]"}>{children}</a>
  </li>
);

const Rule = () => <li className="h-px my-px mr-[2px] bg-[#a5a3a9]" />;

const Actions = () => (
  <aside className="w-[129px] shrink-0 border border-y-0 border-[#c4c2c8] flex flex-col bg-linear-to-r from-[#fdfdfe] from-15% via-[#f0eff2] via-50% to-[#e6e5e9]">
    <PanelHeader>操作</PanelHeader>
    <ul className="pt-[2px] pl-[3px] text-[8px] leading-[13px] whitespace-nowrap">
      <li className="h-[13px] pl-[15px] font-bold">管理服务器</li>
      <ActionRow
        icon={
          <Svg size="w-[9px] h-[9px]">
            <path d="M3 8C4 3 11 1 15 5M17 12C16 17 9 19 5 15" stroke="#55ad4b" strokeWidth="3" />
            <path d="M18 1V9H11ZM2 19V11H9Z" fill="#55ad4b" />
          </Svg>
        }
      >
        重新启动
      </ActionRow>
      <ActionRow disabled icon={<Svg size="w-[9px] h-[9px]"><path d="M6 2 14 10 6 18Z" fill="#a7a6ab" /></Svg>}>启动</ActionRow>
      <ActionRow icon={<Svg size="w-[9px] h-[9px]"><rect x="3" y="3" width="14" height="14" fill="#45474b" /></Svg>}>停止</ActionRow>
      <Rule />
      <ActionRow>查看应用程序池</ActionRow>
      <ActionRow>查看网站</ActionRow>
      <Rule />
      <ActionRow>更改 .NET Framework 版本</ActionRow>
      <Rule />
      <ActionRow
        icon={
          <Svg size="w-[9px] h-[9px]">
            <circle cx="9" cy="9" r="7.500" fill="#8c3c12" />
            <path d="M9 4 12 9 9 14 6 9Z" fill="#ffc06a" />
          </Svg>
        }
      >
        获取新的 Web 平台组件
      </ActionRow>
      <Rule />
      <ActionRow icon={<Help />}>帮助</ActionRow>
    </ul>
  </aside>
);

const IisManager = () => (
  <div className="absolute left-[269px] right-10 top-[60px] bottom-[147px] flex flex-col bg-[#5bc3f1] border-t border-[#4a90b5] pl-[5px] pr-[3px] pb-[5px] text-black">
    <TitleBar />
    <div className="flex-1 min-h-0 mr-px flex flex-col bg-[#e6e4e9]">
      <AddressBar />
      <MenuBar />
      <div className="flex-1 min-h-0 flex gap-[3px]">
        <Connections />
        <HomePage />
        <Actions />
      </div>
      <footer className="h-4 shrink-0 flex items-center justify-between pl-[3px] pr-px text-[8px] bg-linear-to-r from-[#f4f2f6] from-47% to-[#fafafb] to-47% border-t border-[#e9e7ec]">
        就绪
        <span className="flex items-center gap-px">
          <ServerGlobe size="w-[11px] h-[11px]" />
          <Svg size="w-[6px] h-[8px]" box="0 0 6 8"><path d="M5 1V2M5 4V5M5 7V8M2 4V5M2 7V8" stroke="#8c8a90" strokeWidth="1.500" /></Svg>
        </span>
      </footer>
    </div>
  </div>
);

const Pointer = () => (
  <div className="absolute left-[273px] top-[175px] w-12 h-12 rounded-full bg-[#8fe68f]/25 flex items-center justify-center pointer-events-none">
    <Svg size="w-[10px] h-[14px]" box="0 0 10 14">
      <path d="M0.500 1H9.500M0.500 13H9.500" stroke="#000" strokeWidth="1.500" />
      <path d="M1.500 2V4L4.500 7 1.500 10V12H8.500V10L5.500 7 8.500 4V2Z" fill="#fff" stroke="#000" />
      <path d="M3 4H7L5 6ZM3 11.500 5 9 7 11.500Z" fill="#333" />
    </Svg>
  </div>
);

const KeyBadges = () => (
  <div className="absolute right-0 bottom-[26px] w-[52px] flex flex-col gap-[5px] text-[20px] leading-[27px] text-center text-[#b5b5b5] font-light">
    <div className="h-[27px] rounded-sm bg-[#050505]" />
    <div className="h-[27px] rounded-sm bg-[#242424]">左键</div>
    <div className="h-[27px] rounded-sm bg-[#282828]">左键</div>
  </div>
);

const Taskbar = () => (
  <div className="absolute inset-x-0 bottom-0 h-[23px] flex items-stretch bg-[#59c1f0] border-t border-[#3a86ab]">
    <button type="button" aria-label="开始" className="w-8 flex items-center justify-center">
      <Svg size="w-[18px] h-[18px]" box="0 0 18 18">
        <path d="M1 3.500 8 2.500V8.500H1ZM9 2.300 17 1V8.500H9ZM1 9.500H8V15.500L1 14.500ZM9 9.500H17V17L9 15.700Z" fill="#fff" />
      </Svg>
    </button>
    <button type="button" aria-label="服务器管理器" className="w-[38px] flex items-end justify-center">
      <Svg size="w-[22px] h-[20px]" box="0 0 22 20">
        <path d="M1 0H11V20H1Z" fill="#1583d8" />
        <path d="M1 5H11M1 2H11" stroke="#d6efff" />
        <path d="M9 12V9H18V12" stroke="#e7eef4" strokeWidth="1.500" />
        <rect x="5" y="11" width="16" height="9" fill="#7891a8" stroke="#dce7ef" strokeWidth="0.800" />
        <path d="M5 15H21" stroke="#dce7ef" />
      </Svg>
    </button>
    <button type="button" aria-label="PowerShell" className="w-11 flex items-center justify-center">
      <Svg size="w-[20px] h-[18px]" box="0 0 20 18">
        <path d="M4 1H19L16 16H1Z" fill="#2464a8" stroke="#8ec1e8" />
        <path d="M6 4 11 8.500 5 13M10 13.500H15" stroke="#fff" strokeWidth="1.800" />
      </Svg>
    </button>
    <button type="button" aria-label="文件资源管理器" className="w-9 flex items-end justify-center">
      <Svg size="w-[22px] h-[20px]" box="0 0 22 20">
        <path d="M1 3H7L8 1H12L13 3H20V19H1Z" fill="#f3d98c" stroke="#cfa64b" strokeWidth="0.700" />
        <path d="M9 2H11M14 2.500H19" stroke="#d5563c" strokeWidth="1.500" />
        <path d="M1 7H21V19H1Z" fill="#fbe9ac" />
        <path d="M5 20V14C5 12 17 12 17 14V20" stroke="#79c5e8" strokeWidth="3" />
      </Svg>
    </button>
    <button type="button" aria-label="IIS 管理器" className="ml-[2px] w-[38px] flex items-center justify-center bg-[#96d7f6] border-x border-[#7fbfdd]">
      <IisLogo size="w-[21px] h-[21px]" />
    </button>
    <div className="flex-1" />
    <div className="flex items-center gap-[5px] text-[8px] text-[#0d2230]">
      <button type="button" aria-label="显示隐藏的图标" className="mr-[2px]"><Caret up /></button>
      <Svg size="w-[11px] h-[11px]">
        <path d="M2 7H6L11 2V18L6 13H2Z" fill="#fff" stroke="#7b95a3" />
        <circle cx="14" cy="14" r="5.500" fill="#d8392f" />
        <path d="M12 12 16 16M16 12 12 16" stroke="#fff" strokeWidth="1.800" />
      </Svg>
      <Svg size="w-[11px] h-[11px]">
        <path d="M6 4H19V14H6ZM10 18H16M13 14V18" fill="#3c8db5" stroke="#fff" strokeWidth="2" />
        <path d="M1 2V9C1 11 5 11 5 9V2M3 10V18H8" stroke="#fff" strokeWidth="1.800" />
      </Svg>
      <Svg size="w-[11px] h-[11px]">
        <path d="M3 2V19" stroke="#fff" strokeWidth="2.500" />
        <path d="M4 3H14V11H4Z" fill="#fff" />
        <circle cx="14" cy="13" r="5.500" fill="#26323a" stroke="#fff" />
        <path d="M14 10V13H17" stroke="#fff" strokeWidth="1.500" />
      </Svg>
      <span className="w-[14px] text-center text-[10px] text-white">英</span>
      <span className="ml-px w-[11px] h-[11px] bg-white border border-[#333] text-center text-[8px] leading-[9px] text-black">M</span>
    </div>
    <time dateTime="2020-04-04T00:49" className="w-[58px] pt-px text-center text-[8px] leading-[11px] text-[#0d2230]">
      0:49
      <br />
      2020/4/4
    </time>
  </div>
);

/* ---------- player ---------- */

const DURATION = 1277;

const formatTime = (s) =>
  [Math.floor(s / 3600), Math.floor(s / 60) % 60, s % 60].map((n) => String(n).padStart(2, "0")).join(":");

const ProgressBar = ({ position, onSeek }) => {
  const percent = `${(position / DURATION) * 100}%`;
  return (
    <div className="relative z-10 h-[3px] shrink-0 bg-[#484848]">
      <div className="h-full bg-[#0090fa]" style={{ width: percent }} />
      <div
        className="absolute top-1/2 w-[18px] h-[18px] -translate-x-1/2 -translate-y-1/2 rounded-full bg-[#0090fa]/40 flex items-center justify-center"
        style={{ left: percent }}
      >
        <span className="w-[10px] h-[10px] rounded-full bg-[#0090fa]" />
      </div>
      <input
        type="range"
        aria-label="播放进度"
        min="0"
        max={DURATION}
        value={position}
        onChange={(e) => onSeek(Number(e.target.value))}
        className="absolute inset-x-0 -top-2 w-full h-[18px] opacity-0 cursor-pointer"
      />
    </div>
  );
};

const Controls = ({ position }) => (
  <div className="h-[46px] shrink-0 grid grid-cols-[1fr_auto_1fr] items-center bg-[#111111] text-[#0090fa]">
    <p className="pl-[11px] pt-[6px] text-[11px] leading-4 text-white">
      {formatTime(position)} / {formatTime(DURATION)}
    </p>
    <div className="flex items-center gap-[25px] pr-[5px] pt-1">
      <button type="button" aria-label="停止" className="w-[10px] h-[10px] rounded-[1px] bg-[#0090fa]" />
      <button type="button" aria-label="上一个">
        <Svg size="w-3 h-[10px]" box="0 0 12 10"><path d="M0 0H2V10H0ZM12 1V9C12 10 11 10 10.500 9.700L4.500 5.800C4 5.400 4 4.600 4.500 4.200L10.500 0.300C11 0 12 0 12 1Z" fill="currentColor" /></Svg>
      </button>
      <button type="button" aria-label="暂停" className="w-9 h-9 rounded-full border-2 border-[#0090fa] flex items-center justify-center gap-1">
        <span className="w-0.5 h-3 bg-[#0090fa]" />
        <span className="w-0.5 h-3 bg-[#0090fa]" />
      </button>
      <button type="button" aria-label="下一个">
        <Svg size="w-3 h-[10px]" box="0 0 12 10"><path d="M12 0H10V10H12ZM0 1V9C0 10 1 10 1.500 9.700L7.500 5.800C8 5.400 8 4.600 7.500 4.200L1.500 0.300C1 0 0 0 0 1Z" fill="currentColor" /></Svg>
      </button>
      <button type="button" aria-label="音量">
        <Svg size="w-[15px] h-[10px]" box="0 0 15 10">
          <path d="M0 3C0 2.300 0.400 2 1 2H3L7 0.200C7.700 0 8 0.300 8 1V9C8 9.700 7.700 10 7 9.800L3 8H1C0.400 8 0 7.700 0 7Z" fill="currentColor" />
          <path d="M10.500 2C14.300 2 14.300 8 10.500 8" stroke="currentColor" strokeWidth="1.800" />
        </Svg>
      </button>
    </div>
    <div className="flex items-center justify-end gap-[21px] pr-[18px] pt-1 text-[#dcdcdc]">
      <button type="button" aria-label="工具">
        <Svg size="w-[15px] h-[15px]" box="0 0 15 15">
          <path d="M9 14.300H0.700V0.700H14.300V9" stroke="currentColor" strokeWidth="1.200" />
          <path d="M5 4.500C7 3.200 10 5 9.300 7.800L13.700 12.200 12.200 13.700 7.800 9.300C5.500 10 3.700 8 4.200 5.800L6 7.500 7.300 6.200Z" stroke="currentColor" />
        </Svg>
      </button>
      <button type="button" aria-label="设置">
        <Svg size="w-[15px] h-[15px]" box="0 0 15 15">
          <path d="M4.500 2.500H14M0 7.500H10M4.500 12.500H14" stroke="currentColor" strokeWidth="1.200" />
          <circle cx="2.500" cy="2.500" r="1.800" stroke="currentColor" strokeWidth="1.200" />
          <circle cx="12.200" cy="7.500" r="1.800" stroke="currentColor" strokeWidth="1.200" />
          <circle cx="2.500" cy="12.500" r="1.800" stroke="currentColor" strokeWidth="1.200" />
        </Svg>
      </button>
      <button type="button" aria-label="全屏">
        <Svg size="w-[15px] h-[15px]" box="0 0 15 15">
          <path d="M1 5V1H5M10 1H14V5M14 10V14H10M5 14H1V10M1 1 6 6M14 1 9 6M14 14 9 9M1 14 6 9" stroke="currentColor" strokeWidth="1.200" />
        </Svg>
      </button>
    </div>
  </div>
);

const App = () => {
  const [position, setPosition] = useState(1211);

  return (
    <div className="h-screen flex flex-col bg-black font-['Open_Sans','Noto_Sans_CJK_SC',sans-serif]">
      <Defs />
      <div className="relative flex-1 min-h-0 ml-[46px] mr-[53px]">
        <DesktopIcons />
        <RemoteBar />
        <IisManager />
        <Pointer />
        <KeyBadges />
        <Taskbar />
      </div>
      <ProgressBar position={position} onSeek={setPosition} />
      <Controls position={position} />
    </div>
  );
};

export default App;
